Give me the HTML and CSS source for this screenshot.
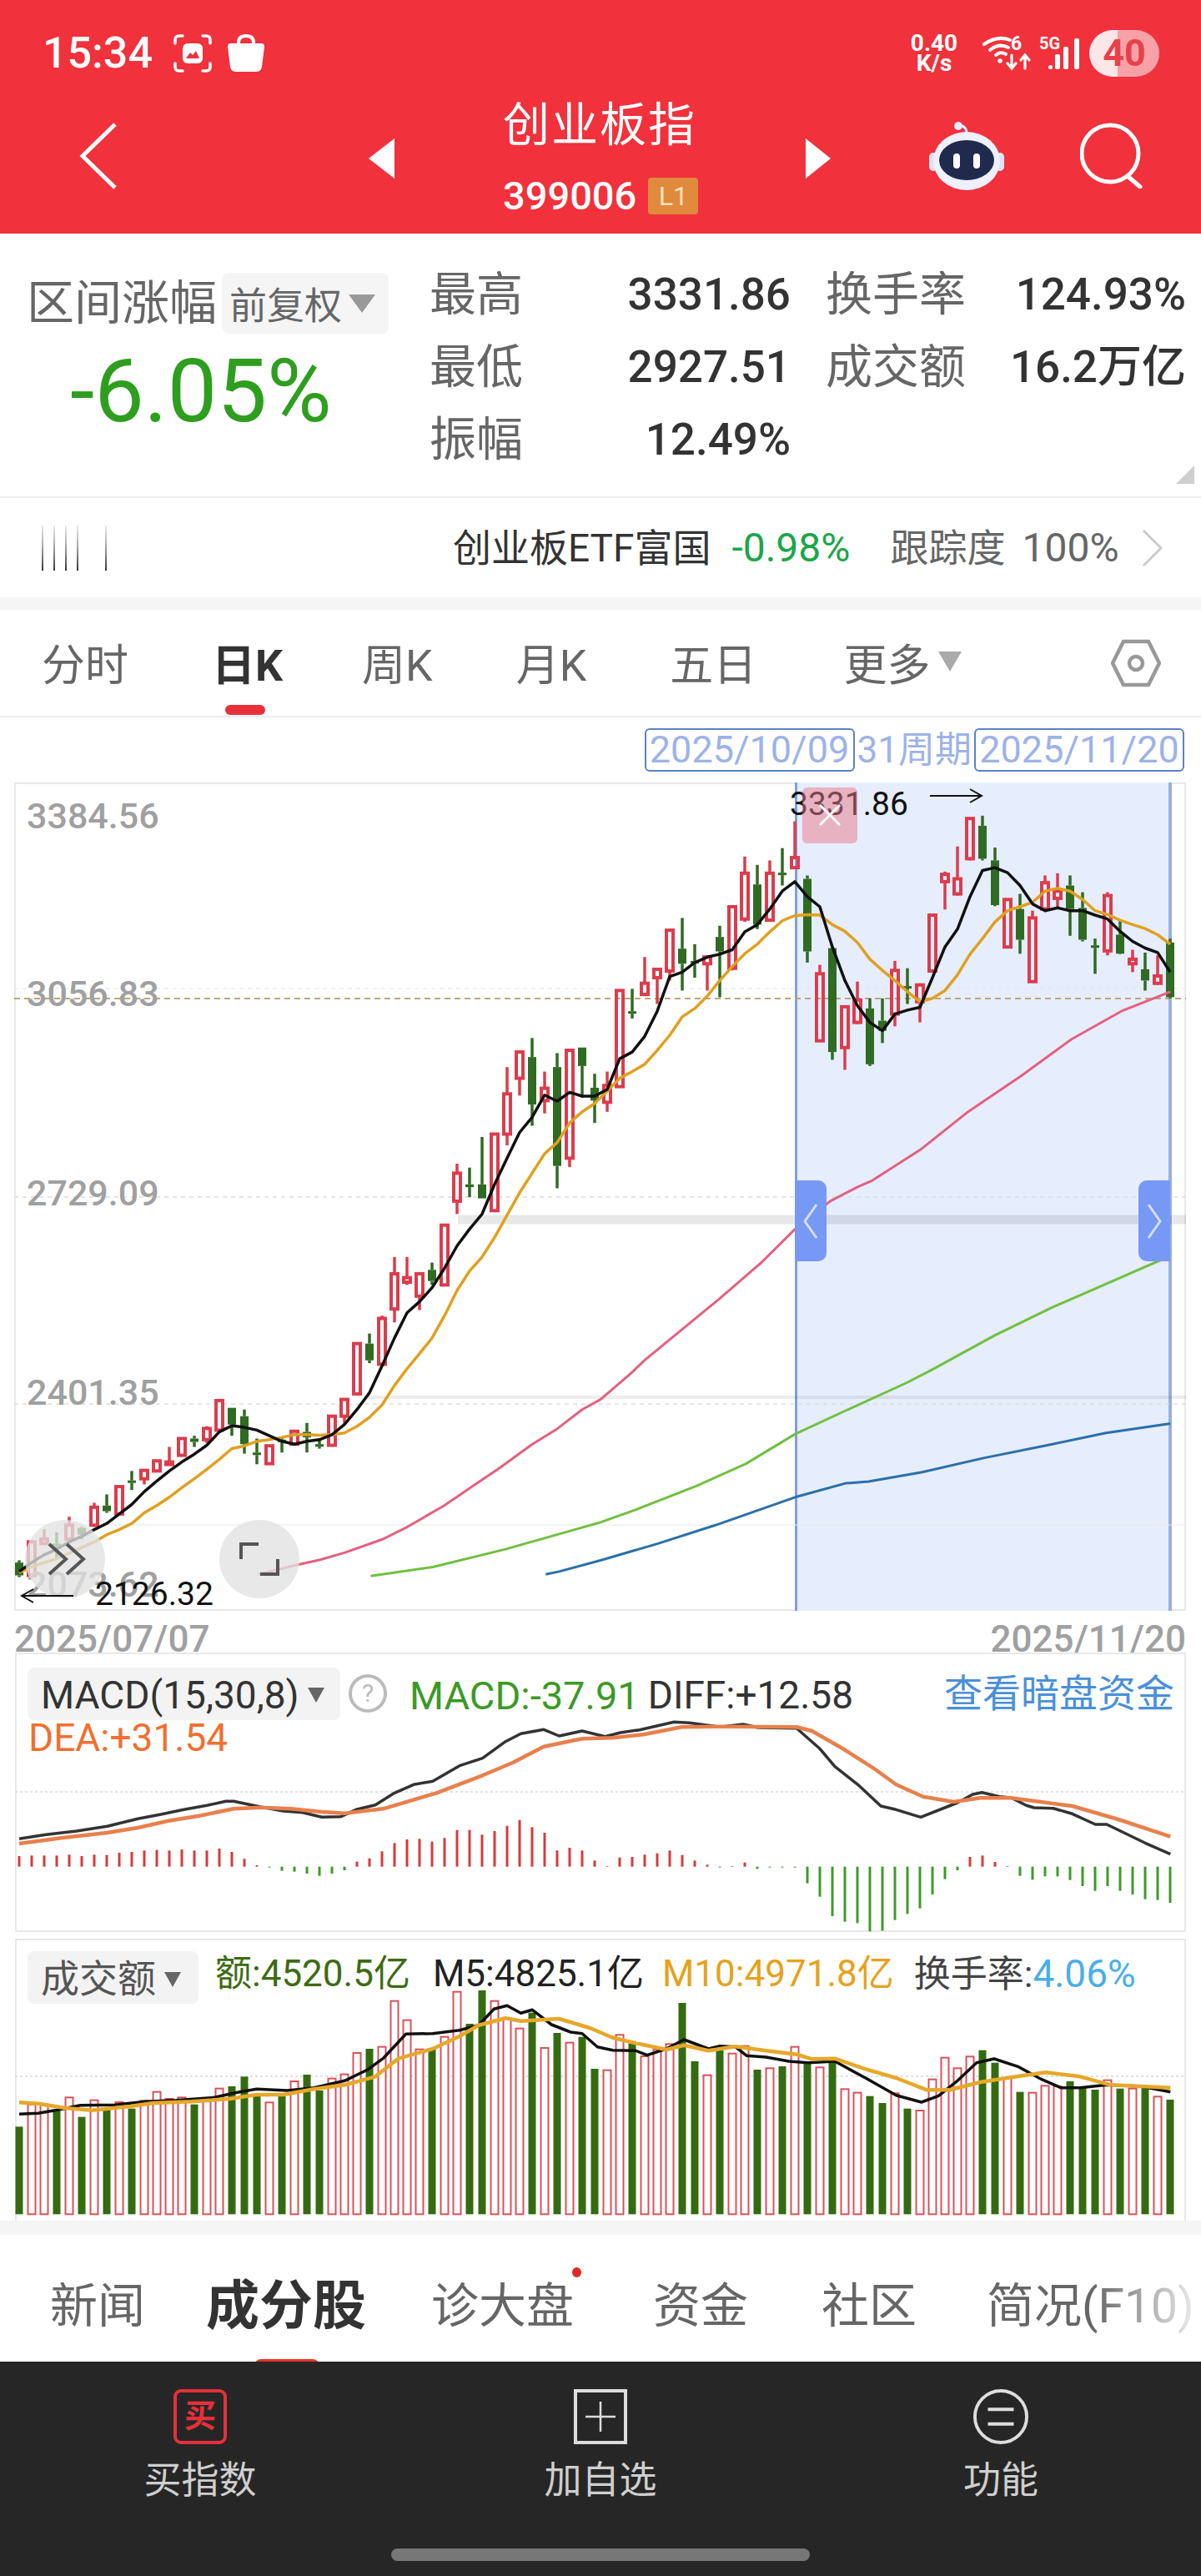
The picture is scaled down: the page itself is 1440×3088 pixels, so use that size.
FILE: index.html
```html
<!DOCTYPE html>
<html lang="zh-CN">
<head>
    <meta charset="UTF-8" />
    <meta name="viewport" content="width=device-width, initial-scale=1.0" />
    <title>创业板指</title>
    <link rel="stylesheet" href="styles.css">
</head>
<body>
    <header class="app-head">
        <div class="status-bar">
            <span class="clock">15:34</span>
            <svg class="shot-icon" viewBox="0 0 46 46" fill="none" stroke="#fff" stroke-width="3.5" stroke-linecap="round">
                <path d="M2 11V7q0-5 5-5h4M35 2h4q5 0 5 5v4M2 35v4q0 5 5 5h4M35 44h4q5 0 5-5v-4"/>
                <rect x="11" y="11" width="24" height="24" rx="6" fill="#fff" stroke="none"/>
                <path d="M15 29l5-7 3 3 4-5 4 9z" fill="#f1313b" stroke="none"/>
            </svg>
            <svg class="bag-icon" viewBox="0 0 44 46">
                <path d="M13 14V10q0-8 9-8t9 8v4" fill="none" stroke="#fff" stroke-width="4"/>
                <path d="M4 11h36q4 0 4 4l-3 24q-1 6-7 6H10q-6 0-7-6L0 15q0-4 4-4z" fill="#fff"/>
            </svg>
            <div class="status-right">
                <span class="net-speed">0.40<br>K/s</span>
                <div class="wifi">
                    <svg viewBox="0 0 58 46" fill="none" stroke="#fff" stroke-linecap="round">
                        <path d="M2 12Q18 1 33 7" stroke-width="4"/>
                        <path d="M9 19Q20 10 31 16" stroke-width="4"/>
                        <path d="M16 25q6-5 12-1" stroke-width="4"/>
                        <circle cx="21" cy="32" r="2.8" fill="#fff" stroke="none"/>
                        <path d="M35 25v16m-5-6l5 6 5-6M51 41V25m-5 6l5-6 5 6" stroke-width="3.2"/>
                    </svg>
                    <span class="wifi-num">6</span>
                </div>
                <div class="signal">
                    <svg viewBox="0 0 50 46">
                        <rect x="11" y="37" width="5" height="5" rx="2.5" fill="#fff"/>
                        <rect x="19" y="24" width="6" height="18" rx="2" fill="#fff"/>
                        <rect x="29" y="15" width="6" height="27" rx="2" fill="#fff"/>
                        <rect x="42" y="5" width="6" height="37" rx="2" fill="#fff"/>
                    </svg>
                    <span class="signal-txt">5G</span>
                </div>
                <span class="battery">40</span>
            </div>
        </div>
        <div class="nav-row">
            <svg class="back-icon" viewBox="0 0 46 80" fill="none" stroke="#fff" stroke-width="5">
                <path d="M43 2L4 40l39 38"/>
            </svg>
            <div class="tri-left"></div>
            <div class="nav-title">
                <div class="name">创业板指</div>
                <div class="code">399006<span class="level">L1</span></div>
            </div>
            <div class="tri-right"></div>
            <svg class="robot" viewBox="0 0 90 84">
                <path d="M45 14q0-7-8-9" fill="none" stroke="#e9ecfa" stroke-width="3"/>
                <circle cx="35" cy="6" r="5" fill="#e9ecfa"/>
                <rect x="0" y="38" width="10" height="22" rx="5" fill="#dfe2f5"/>
                <rect x="80" y="38" width="10" height="22" rx="5" fill="#dfe2f5"/>
                <ellipse cx="45" cy="48" rx="40" ry="35" fill="#eef0fb"/>
                <ellipse cx="45" cy="47" rx="33" ry="24" fill="#1f2a4d"/>
                <rect x="29" y="39" width="8" height="18" rx="4" fill="#fff"/>
                <rect x="53" y="39" width="8" height="18" rx="4" fill="#fff"/>
            </svg>
            <svg class="search-icon" viewBox="0 0 76 80" fill="none" stroke="#fff" stroke-width="5">
                <circle cx="36" cy="38" r="34"/>
                <path d="M58 66l14 12" stroke-linecap="round"/>
            </svg>
        </div>
    </header>

    <section class="stats">
        <div class="range">
            <div class="range-top">
                <span class="range-label">区间涨幅</span>
                <span class="adjust">前复权<i class="caret"></i></span>
            </div>
            <div class="range-value">-6.05%</div>
        </div>
        <div class="stat-grid">
            <span class="k">最高</span><span class="v">3331.86</span><span class="k">换手率</span><span class="v">124.93%</span>
            <span class="k">最低</span><span class="v">2927.51</span><span class="k">成交额</span><span class="v">16.2万亿</span>
            <span class="k">振幅</span><span class="v">12.49%</span>
        </div>
        <div class="corner"></div>
    </section>

    <section class="etf-row">
        <svg class="ghost-lines" viewBox="0 0 90 54">
            <defs>
                <linearGradient id="fade" x1="0" y1="0" x2="0" y2="1">
                    <stop offset="0" stop-color="#888" stop-opacity="0.2"/>
                    <stop offset="1" stop-color="#333"/>
                </linearGradient>
            </defs>
            <rect x="2" width="2" height="54" fill="url(#fade)"/>
            <rect x="16" width="2" height="54" fill="url(#fade)"/>
            <rect x="30" width="2" height="54" fill="url(#fade)"/>
            <rect x="44" width="2" height="54" fill="url(#fade)"/>
            <rect x="78" width="2" height="54" fill="url(#fade)"/>
        </svg>
        <span class="etf-name">创业板ETF富国</span>
        <span class="etf-pct">-0.98%</span>
        <span class="etf-track">跟踪度</span>
        <span class="etf-full">100%</span>
        <svg class="etf-arrow" viewBox="0 0 28 44" fill="none" stroke="#ccc" stroke-width="3"><path d="M3 1l21 21L3 43"/></svg>
    </section>

    <div class="band"></div>

    <nav class="period-tabs">
        <span>分时</span>
        <span class="on">日K</span>
        <span>周K</span>
        <span>月K</span>
        <span>五日</span>
        <span class="more">更多<i class="caret"></i></span>
        <svg class="hex" viewBox="0 0 60 58" fill="none" stroke="#999" stroke-width="4.5">
            <path d="M15 3h30l13 26-13 26H15L2 29z"/>
            <circle cx="30" cy="29" r="8"/>
        </svg>
    </nav>

    <div class="range-dates">
        <span class="date-box">2025/10/09</span>
        <span class="range-days">31周期</span>
        <span class="date-box">2025/11/20</span>
    </div>

    <section class="kline">
        <div class="selection"></div>
        <svg id="klineChart" class="chart-svg" viewBox="17 937 1405 993"></svg>
        <span class="axis a1">3384.56</span>
        <span class="axis a2">3056.83</span>
        <span class="axis a3">2729.09</span>
        <span class="axis a4">2401.35</span>
        <span class="axis a5">2073.62</span>
        <div class="round-btn btn-skip">
            <svg viewBox="0 0 50 40" fill="none" stroke="#555" stroke-width="4"><path d="M3 2l20 18L3 38M24 2l20 18-20 18"/></svg>
        </div>
        <div class="round-btn btn-full">
            <svg viewBox="0 0 50 40" fill="none" stroke="#555" stroke-width="4"><path d="M24 2H3v18M26 38h21V20"/></svg>
        </div>
        <span class="peak-label low">2126.32</span>
        <span class="peak-label high">3331.86</span>
        <svg class="mark-arrow arrow-low" viewBox="0 0 64 20" fill="none" stroke="#111" stroke-width="2"><path d="M64 10H2m14-8L2 10l14 8"/></svg>
        <svg class="mark-arrow arrow-high" viewBox="0 0 64 20" fill="none" stroke="#111" stroke-width="2"><path d="M0 10h62m-14-8l14 8-14 8"/></svg>
        <div class="close-tag">
            <svg viewBox="0 0 30 30" fill="none" stroke="#fff" stroke-width="3"><path d="M3 3l24 24M27 3L3 27"/></svg>
        </div>
        <div class="handle handle-l">
            <svg viewBox="0 0 20 44" fill="none" stroke="#d5defb" stroke-width="3"><path d="M17 2L3 22l14 20"/></svg>
        </div>
        <div class="handle handle-r">
            <svg viewBox="0 0 20 44" fill="none" stroke="#d5defb" stroke-width="3"><path d="M3 2l14 20L3 42"/></svg>
        </div>
    </section>

    <div class="axis-dates">
        <span>2025/07/07</span>
        <span>2025/11/20</span>
    </div>

    <section class="panel macd">
        <svg id="macdChart" class="panel-svg" viewBox="18 1980 1404 335"></svg>
        <div class="panel-head">
            <span class="picker picker-macd">MACD(15,30,8)<i class="caret"></i></span>
            <span class="help">?</span>
            <span class="c-green">MACD:-37.91</span>
            <span class="c-dark">DIFF:+12.58</span>
            <a class="dark-pool">查看暗盘资金</a>
        </div>
        <div class="dea">DEA:+31.54</div>
    </section>

    <section class="panel volume">
        <svg id="volChart" class="panel-svg" viewBox="18 2323 1404 338"></svg>
        <div class="panel-head">
            <span class="picker picker-vol">成交额<i class="caret"></i></span>
            <span class="c-olive">额:4520.5亿</span>
            <span class="c-black">M5:4825.1亿</span>
            <span class="c-gold">M10:4971.8亿</span>
            <span class="c-dark">换手率:<b class="c-sky">4.06%</b></span>
        </div>
    </section>

    <div class="band band-low"></div>

    <nav class="info-tabs">
        <span class="t1">新闻</span>
        <span class="t2 on">成分股</span>
        <span class="t3">诊大盘<i class="dot"></i></span>
        <span class="t4">资金</span>
        <span class="t5">社区</span>
        <span class="t6">简况(F10)</span>
    </nav>

    <footer class="action-bar">
        <div class="actions">
            <div class="action">
                <span class="buy-icon">买</span>
                <span class="action-label">买指数</span>
            </div>
            <div class="action">
                <svg class="action-icon" viewBox="0 0 64 66" fill="none" stroke="#ddd" stroke-width="4">
                    <rect x="2" y="2" width="60" height="62"/>
                    <path d="M14 33h36M32 15v36" stroke-width="2.5"/>
                </svg>
                <span class="action-label">加自选</span>
            </div>
            <div class="action">
                <svg class="action-icon" viewBox="0 0 68 68" fill="none" stroke="#ddd" stroke-width="4">
                    <circle cx="34" cy="34" r="32"/>
                    <path d="M18 25h32M18 43h32"/>
                </svg>
                <span class="action-label">功能</span>
            </div>
        </div>
        <div class="home-bar"></div>
    </footer>

    <script src="chart.js"></script>
</body>
</html>
```

FILE: styles.css
```css
* {
    box-sizing: border-box;
}
body {
    margin: 0;
    width: 1440px;
    background: #fff;
    font-family: Roboto, "Noto Sans CJK SC", sans-serif;
    color: #333;
    overflow-x: hidden;
}
svg {
    display: block;
    flex: none;
}

/* red header */
.app-head {
    height: 280px;
    background: #f1313b;
    color: #fff;
}
.status-bar {
    display: flex;
    align-items: center;
    height: 128px;
    padding: 0 50px 0 51px;
}
.clock {
    width: 133px;
    font-size: 52px;
    font-weight: 500;
    line-height: 60px;
}
.shot-icon {
    width: 46px;
    height: 46px;
    margin-left: 24px;
}
.bag-icon {
    width: 44px;
    height: 46px;
    margin-left: 19px;
}
.status-right {
    display: flex;
    align-items: center;
    margin-left: auto;
}
.net-speed {
    width: 60px;
    font-size: 28px;
    font-weight: 700;
    line-height: 24px;
    text-align: center;
}
.wifi, .signal {
    position: relative;
    height: 46px;
}
.wifi svg, .signal svg {
    width: 100%;
    height: 46px;
}
.wifi {
    width: 58px;
    margin-left: 28px;
}
.wifi-num {
    position: absolute;
    left: 34px;
    top: 2px;
    font-size: 23px;
    font-weight: 700;
    line-height: 20px;
}
.signal {
    width: 50px;
    margin-left: 10px;
}
.signal-txt {
    position: absolute;
    left: 0;
    top: 2px;
    font-size: 20px;
    font-weight: 700;
    line-height: 18px;
}
.battery {
    width: 84px;
    height: 56px;
    margin-left: 10px;
    border-radius: 28px;
    background: linear-gradient(90deg, #fbe6e8 40%, #f8a2a7 40%);
    color: #e8404a;
    font-size: 45px;
    font-weight: 700;
    line-height: 56px;
    text-align: center;
}
.nav-row {
    display: flex;
    align-items: flex-start;
    height: 152px;
    padding-left: 95px;
}
.back-icon {
    width: 46px;
    height: 80px;
    margin-top: 19px;
}
.tri-left, .tri-right {
    width: 0;
    height: 0;
    margin-top: 38px;
    border-top: 24px solid transparent;
    border-bottom: 24px solid transparent;
}
.tri-left {
    border-right: 31px solid #fff;
    margin-left: 301px;
}
.tri-right {
    border-left: 30px solid #fff;
}
.nav-title {
    width: 493px;
    margin-top: -15px;
    padding-left: 130px;
}
.name {
    font-size: 56px;
    line-height: 74px;
    letter-spacing: 2px;
}
.code {
    display: flex;
    align-items: center;
    margin-top: 23px;
    font-size: 47px;
    font-weight: 500;
    line-height: 50px;
}
.level {
    width: 60px;
    height: 44px;
    margin-left: 14px;
    border-radius: 4px;
    background: #e08a3c;
    color: #fbe3b8;
    font-size: 32px;
    font-weight: 400;
    line-height: 44px;
    text-align: center;
}
.robot {
    width: 90px;
    height: 84px;
    margin-left: 118px;
    margin-top: 17px;
}
.search-icon {
    width: 76px;
    height: 80px;
    margin-left: 91px;
    margin-top: 18px;
}

/* stats */
.stats {
    position: relative;
    display: flex;
    height: 317px;
    border-bottom: 2px solid #eeeeee;
}
.range {
    width: 515px;
    padding: 47px 0 0 32px;
}
.range-top {
    display: flex;
    align-items: center;
}
.range-label {
    color: #666;
    font-size: 57px;
    line-height: 72px;
    white-space: nowrap;
}
.adjust {
    display: flex;
    align-items: center;
    width: 200px;
    height: 73px;
    margin-left: 6px;
    padding-left: 9px;
    border-radius: 8px;
    background: #f5f5f5;
    color: #666;
    font-size: 45px;
    white-space: nowrap;
}
.caret {
    display: inline-block;
    border-left: 16px solid transparent;
    border-right: 16px solid transparent;
    border-top: 22px solid #999;
}
.adjust .caret {
    margin-left: 8px;
}
.range-value {
    margin: 14px 0 0 52px;
    color: #2e9e1f;
    font-size: 106px;
    line-height: 110px;
}
.stat-grid {
    display: grid;
    grid-template-columns: 153px 280px 212px 262px;
    grid-auto-rows: 87px;
    align-items: center;
    width: 907px;
    padding-top: 30px;
}
.stat-grid .k {
    color: #666;
    font-size: 56px;
    line-height: 87px;
    white-space: nowrap;
}
.stat-grid .k:nth-child(3), .stat-grid .k:nth-child(7) {
    padding-left: 42px;
}
.stat-grid .v {
    color: #333;
    font-size: 53px;
    font-weight: 500;
    line-height: 87px;
    text-align: right;
    white-space: nowrap;
}
.corner {
    position: absolute;
    right: 8px;
    top: 278px;
    border-left: 22px solid transparent;
    border-bottom: 22px solid #cfcfcf;
}

/* etf row */
.etf-row {
    display: flex;
    align-items: center;
    height: 119px;
    padding-left: 48px;
    font-size: 46px;
    line-height: 60px;
    white-space: nowrap;
}
.ghost-lines {
    width: 90px;
    height: 54px;
}
.etf-name {
    margin-left: 405px;
    color: #333;
}
.etf-pct {
    margin-left: 25px;
    color: #1aa64a;
    font-size: 48px;
}
.etf-track {
    margin-left: 48px;
    color: #666;
}
.etf-full {
    margin-left: 20px;
    color: #666;
    font-size: 48px;
}
.etf-arrow {
    width: 28px;
    height: 44px;
    margin-left: 26px;
}
.band {
    height: 15px;
    background: #f5f5f5;
}

/* period tabs */
.period-tabs {
    display: flex;
    align-items: center;
    height: 129px;
    padding: 8px 48px 0 50px;
    border-bottom: 2px solid #eeeeee;
    color: #666;
    font-size: 52px;
    line-height: 60px;
    white-space: nowrap;
}
.period-tabs span {
    margin-right: 100px;
}
.period-tabs .on {
    position: relative;
    margin-left: 0;
    margin-right: 95px;
    color: #333;
    font-weight: 700;
}
.period-tabs .on::after {
    content: "";
    position: absolute;
    left: 16px;
    top: 76px;
    width: 48px;
    height: 12px;
    border-radius: 6px;
    background: #e8303a;
}
.period-tabs .more {
    display: flex;
    align-items: center;
    margin-left: 4px;
    margin-right: 0;
}
.more .caret {
    margin: -12px 0 0 10px;
    border-left-width: 14px;
    border-right-width: 14px;
    border-top-width: 24px;
    border-top-color: #aaa;
}
.hex {
    width: 60px;
    height: 58px;
    margin-left: auto;
    margin-top: -8px;
}

/* selected date range */
.range-dates {
    display: flex;
    justify-content: flex-end;
    align-items: center;
    height: 78px;
    padding-right: 20px;
    color: #9db3e8;
    font-size: 44px;
    white-space: nowrap;
}
.date-box {
    width: 252px;
    height: 52px;
    border: 2px solid #5b82c8;
    border-radius: 6px;
    font-size: 45px;
    line-height: 48px;
    text-align: center;
}
.range-days {
    margin: 0 3px;
    line-height: 52px;
}

/* k-line area */
.kline {
    position: relative;
    width: 1405px;
    height: 993px;
    margin-left: 17px;
    border: 2px solid #e8e8e8;
}
.selection {
    position: absolute;
    left: 934px;
    top: -2px;
    width: 452px;
    height: 993px;
    background: #e6edfd;
    border-left: 3px solid #7f9fe0;
    border-right: 4px solid #9ab0dc;
}
.chart-svg {
    position: absolute;
    left: -2px;
    top: -2px;
    width: 1405px;
    height: 993px;
}
.axis {
    position: absolute;
    left: 13px;
    color: #a0a0a0;
    font-size: 43px;
    font-weight: 500;
    line-height: 50px;
}
.a1 { top: 13px; }
.a2 { top: 226px; }
.a3 { top: 465px; }
.a4 { top: 704px; }
.a5 { top: 934px; }
.round-btn {
    position: absolute;
    top: 882px;
    width: 96px;
    height: 94px;
    border-radius: 50%;
    background: rgba(226, 226, 226, 0.78);
}
.btn-skip {
    left: 11px;
}
.btn-full {
    left: 244px;
}
.btn-skip svg {
    width: 50px;
    height: 40px;
    margin: 27px 0 0 26px;
}
.btn-full svg {
    width: 50px;
    height: 40px;
    margin: 27px 0 0 23px;
}
.peak-label {
    position: absolute;
    color: #111;
    font-size: 39px;
    line-height: 44px;
}
.low {
    left: 95px;
    top: 949px;
}
.high {
    left: 928px;
    top: 2px;
}
.mark-arrow {
    position: absolute;
    width: 64px;
    height: 20px;
}
.arrow-low {
    left: 5px;
    top: 963px;
}
.arrow-high {
    left: 1096px;
    top: 4px;
}
.close-tag {
    position: absolute;
    left: 943px;
    top: 4px;
    width: 66px;
    height: 67px;
    border-radius: 6px;
    background: rgba(232, 120, 135, 0.5);
}
.close-tag svg {
    width: 30px;
    height: 30px;
    margin: 18px 0 0 18px;
}
.handle {
    position: absolute;
    top: 475px;
    width: 38px;
    height: 97px;
    background: #7898f5;
}
.handle svg {
    width: 20px;
    height: 44px;
    margin: 27px 0 0 9px;
}
.handle-l {
    left: 934px;
    border-radius: 0 10px 10px 0;
}
.handle-r {
    left: 1346px;
    border-radius: 10px 0 0 10px;
}
.axis-dates {
    display: flex;
    justify-content: space-between;
    height: 50px;
    padding: 0 18px 0 17px;
    color: #a0a0a0;
    font-size: 44px;
    font-weight: 500;
    line-height: 68px;
}

/* macd and volume panels */
.panel {
    position: relative;
    width: 1404px;
    margin-left: 18px;
    border: 2px solid #e8e8e8;
}
.macd {
    height: 335px;
}
.volume {
    height: 338px;
    margin-top: 8px;
    border-bottom: 0;
}
.panel-svg {
    position: absolute;
    left: -2px;
    top: -2px;
    width: 1404px;
}
.macd .panel-svg {
    height: 335px;
}
.volume .panel-svg {
    height: 338px;
}
.panel-head {
    position: relative;
    display: flex;
    align-items: center;
    padding: 13px 0 0 13px;
    font-size: 46px;
    line-height: 63px;
    white-space: nowrap;
}
.picker {
    display: flex;
    align-items: center;
    height: 63px;
    padding: 4px 0 0 16px;
    border-radius: 8px;
    background: #f3f3f3;
    color: #333;
}
.picker .caret {
    margin-left: 10px;
    border-left-width: 10px;
    border-right-width: 10px;
    border-top-width: 18px;
    border-top-color: #666;
}
.picker-macd {
    width: 375px;
    flex: none;
}
.picker-vol {
    width: 205px;
    flex: none;
    color: #555;
}
.help {
    width: 46px;
    height: 46px;
    margin-left: 10px;
    border: 4px solid #bbb;
    border-radius: 50%;
    color: #bbb;
    font-size: 30px;
    line-height: 38px;
    text-align: center;
}
.macd .c-green, .macd .c-dark {
    margin-top: 5px;
}
.c-green {
    margin-left: 27px;
    color: #3b9a26;
    font-size: 47px;
}
.c-dark {
    margin-left: 10px;
    color: #333;
}
.dark-pool {
    margin-left: auto;
    margin-right: 12px;
    color: #4a90d9;
    font-size: 46px;
}
.dea {
    position: relative;
    margin-top: -6px;
    padding-left: 14px;
    color: #f07030;
    font-size: 46px;
    line-height: 50px;
}
.volume .panel-head span:not(.picker) {
    margin-top: -8px;
    font-size: 44px;
}
.c-olive {
    margin-left: 20px;
    color: #3e6b12;
}
.c-black {
    margin-left: 27px;
    color: #222;
}
.c-gold {
    margin-left: 22px;
    color: #e6a21b;
}
.volume .c-dark {
    margin-left: 24px;
    color: #444;
}
.c-sky {
    color: #4aaee8;
    font-size: 46px;
    font-weight: 400;
}

/* lower tabs */
.band-low {
    height: 17px;
}
.info-tabs {
    position: relative;
    display: flex;
    align-items: center;
    height: 152px;
    padding-top: 20px;
    overflow: hidden;
    color: #666;
    font-size: 57px;
    line-height: 70px;
    white-space: nowrap;
}
.info-tabs::after {
    content: "";
    position: absolute;
    right: 0;
    top: 0;
    width: 130px;
    height: 100%;
    background: linear-gradient(90deg, rgba(255, 255, 255, 0), rgba(255, 255, 255, 0.92));
}
.info-tabs span {
    position: relative;
    flex: none;
}
.info-tabs .t1 { margin-left: 60px; }
.info-tabs .t2 {
    margin-left: 73px;
    color: #333;
    font-size: 64px;
    font-weight: 700;
}
.info-tabs .t2::after {
    content: "";
    position: absolute;
    left: 58px;
    top: 98px;
    width: 78px;
    height: 18px;
    border-radius: 8px 8px 0 0;
    background: #e8352e;
}
.info-tabs .t3 { margin-left: 78px; }
.info-tabs .t4 { margin-left: 95px; }
.info-tabs .t5 { margin-left: 88px; }
.info-tabs .t6 { margin-left: 84px; }
.dot {
    position: absolute;
    right: -9px;
    top: -12px;
    width: 11px;
    height: 12px;
    border-radius: 50%;
    background: #e02a2a;
}

/* bottom bar */
.action-bar {
    height: 259px;
    background: #262626;
}
.actions {
    display: grid;
    grid-template-columns: repeat(3, 480px);
    padding-top: 33px;
}
.action {
    display: flex;
    flex-direction: column;
    align-items: center;
}
.action-icon {
    width: 66px;
    height: 66px;
}
.buy-icon {
    width: 64px;
    height: 66px;
    border: 4px solid #e5303a;
    border-radius: 9px;
    color: #e5303a;
    font-size: 38px;
    font-weight: 700;
    line-height: 56px;
    text-align: center;
}
.action-label {
    margin-top: 14px;
    color: #cfcfcf;
    font-size: 45px;
    line-height: 60px;
}
.home-bar {
    width: 502px;
    height: 15px;
    margin: 51px auto 0;
    border-radius: 8px;
    background: #777;
}
```

FILE: chart.js
```js
const SVG_NS = 'http://www.w3.org/2000/svg';

// x of the nth trading day, shared by all three charts
const dayX = i => 23 + 15 * i;

// [wick top, body top, body bottom, wick bottom, up?] read off the reference
const candles = [
    [1388,1392,1415,1418,0],[1355,1355,1415,1415,1],[1332,1350,1358,1360,1],[1338,1358,1361,1385,0],
    [1310,1325,1350,1355,1],[1328,1330,1342,1350,0],[1285,1293,1325,1328,1],[1270,1290,1300,1303,0],
    [1255,1256,1305,1305,1],[1228,1245,1247,1262,0],[1225,1227,1242,1252,1],[1208,1210,1228,1230,1],
    [1185,1212,1215,1216,1],[1170,1170,1200,1202,1],[1165,1170,1176,1185,0],[1148,1152,1172,1178,1],
    [1102,1102,1155,1160,1],[1115,1115,1145,1165,0],[1118,1130,1180,1197,0],[1170,1195,1198,1216,0],
    [1183,1183,1215,1215,1],[1168,1172,1175,1195,0],[1155,1157,1180,1180,1],[1142,1158,1168,1195,0],
    [1170,1180,1182,1188,0],[1128,1130,1182,1182,1],[1098,1100,1130,1145,1],[1000,1000,1090,1090,1],
    [982,1000,1030,1035,0],[950,955,1037,1037,1],[845,875,938,962,1],[845,882,890,895,1],
    [872,875,915,940,1],[855,868,888,895,0],[788,788,895,895,1],[678,695,745,768,1],
    [685,715,720,738,0],[630,715,740,740,0],[625,625,762,762,1],[505,553,625,645,1],
    [478,478,525,556,1],[453,487,572,610,0],[513,543,565,588,1],[480,505,682,722,0],
    [473,475,668,684,1],[470,470,503,560,0],[517,542,565,605,0],[513,538,568,585,1],
    [368,368,540,540,1],[365,405,408,418,0],[308,355,375,378,1],[328,330,345,392,1],
    [260,260,333,350,1],[238,293,320,368,0],[285,315,318,345,0],[305,308,320,368,1],
    [252,272,298,380,0],[218,218,328,332,1],[128,158,240,245,1],[143,178,250,258,0],
    [135,158,242,243,1],[113,157,160,180,0],[65,130,148,150,1],[162,168,298,318,0],
    [322,338,458,458,1],[292,292,478,492,0],[395,397,470,510,1],[352,385,425,428,1],
    [382,400,500,503,0],[382,422,440,462,0],[315,332,410,432,1],[328,360,362,392,0],
    [355,358,388,425,1],[233,233,333,335,1],[155,160,173,223,1],[110,168,195,198,1],
    [60,60,132,135,1],[55,73,132,135,0],[112,135,215,217,0],[205,205,290,292,1],
    [195,222,277,302,0],[225,238,352,352,1],[162,175,222,225,1],[158,190,203,222,1],
    [162,180,222,270,0],[192,220,277,280,0],[275,287,290,338,0],[192,198,297,305,1],
    [242,268,302,303,0],[295,312,320,335,1],[300,330,350,368,0],[305,342,355,358,1],
    [275,282,380,382,0]
];

const ma5 = [1408,1392,1378,1368,1355,1345,1333,1322,1305,1288,1265,1246,1228,1212,1198,1182,1158,1147,1150,1155,1165,1175,1180,1175,1172,1163,1145,1118,1088,1040,990,945,925,900,865,825,795,768,715,668,622,595,555,566,550,557,557,
    545,490,478,450,405,343,335,318,308,303,295,263,250,222,190,173,200,218,290,350,395,425,440,410,403,398,345,290,258,200,153,148,157,180,213,225,220,225,225,233,240,262,280,292,300,335];
const ma10 = [1410,1400,1392,1385,1375,1365,1355,1342,1333,1322,1303,1290,1275,1258,1242,1225,1207,1188,1183,1175,1172,1168,1163,1163,1164,1163,1160,1148,1132,1110,1075,1045,1018,990,950,905,870,845,810,770,730,695,660,640,605,585,570,
    548,525,513,500,475,448,415,400,378,350,325,302,285,263,243,234,232,233,250,262,282,312,332,350,370,388,382,368,340,303,275,245,225,218,210,190,185,190,205,225,232,242,250,257,268,285];

// long averages as [x, y] in page pixels
const fromLeft = pts => pts.map(p => [p[0] * 720 / 1568, 940 + p[1] * 1050 / 1568]);
const fromRight = pts => pts.map(p => [720 + p[0] * 720 / 1568, 940 + p[1] * 1050 / 1568]);

const ma60 = fromLeft([[675,1413],[770,1397],[836,1387],[901,1374],[1000,1350],[1064,1328],[1160,1290],[1260,1243],[1300,1225],[1390,1180],[1456,1152],[1520,1118]])
    .concat(fromRight([[0,1100],[80,1053],[115,1030],[310,920],[420,855],[508,795],[600,745],[670,720],[710,708],[835,653],[960,585],[1100,520],[1230,455],[1360,405],[1488,370]]));
const ma120 = fromLeft([[968,1416],[1130,1400],[1320,1368]])
    .concat(fromRight([[0,1320],[90,1298],[250,1255],[380,1215],[508,1162],[640,1120],[800,1070],[870,1045],[1030,985],[1180,935],[1488,843]]));
const ma250 = fromLeft([[1425,1413],[1460,1408]])
    .concat(fromRight([[0,1388],[80,1372],[150,1358],[300,1325],[508,1275],[640,1250],[700,1247],[840,1230],[1000,1205],[1180,1180],[1320,1160],[1488,1143]]));

const diffLine = [[25,700],[60,685],[100,672],[140,655],[180,628],[210,612],[240,595],[270,580],[295,565],[305,565],[340,585],[370,600],[395,605],[420,622],[445,620],[465,595],[490,578],[515,535],[540,505],[565,493],[600,437],[630,410],[660,350],[680,322],[710,307],[730,330],[760,312],[790,332],[810,318],[835,308],[880,280],[900,283],[940,298],[970,288],[990,300],[1040,302],[1070,375],[1090,440],[1120,505],[1150,582],[1170,595],[1202,622],[1250,570],[1270,540],[1282,533],[1305,548],[1320,552],[1340,580],[1350,588],[1375,590],[1400,610],[1430,648],[1445,648],[1495,715],[1528,755]];
const deaLine = [[25,717],[80,697],[140,678],[180,660],[220,635],[260,617],[305,592],[340,587],[380,592],[420,603],[450,608],[500,592],[570,535],[630,472],[670,425],[710,368],[760,340],[800,337],[840,325],[890,298],[940,296],[1040,298],[1060,312],[1100,375],[1140,445],[1170,505],[1205,548],[1245,567],[1280,553],[1320,553],[1400,582],[1460,630],[1528,692]];
const macdBars = [762,760,760,760,757,762,757,758,750,747,742,740,742,738,742,742,735,747,772,795,803,815,818,825,833,825,813,782,770,745,715,702,700,710,697,668,668,685,672,653,632,658,678,742,732,742,778,798,767,765,757,752,742,758,778,793,803,798,785,808,803,803,803,860,908,978,998,1003,1033,1030,992,970,950,900,845,813,765,760,783,798,833,847,835,835,848,870,887,870,887,900,917,920,930];

const volBars = [685,605,605,625,580,650,590,625,597,620,592,560,585,580,605,585,548,540,505,575,598,575,522,498,555,512,497,420,405,398,233,302,407,403,362,200,315,195,233,295,332,275,402,348,383,362,477,482,355,385,432,408,388,240,450,500,410,422,395,480,475,468,398,455,472,450,550,563,575,600,565,620,627,515,437,475,433,410,455,510,560,563,538,540,522,540,552,518,548,548,545,577,588];
const volM5 = [[25,640],[50,637],[75,625],[105,608],[150,607],[190,595],[230,590],[280,580],[310,562],[335,550],[375,555],[410,545],[450,520],[480,480],[500,440],[530,352],[565,350],[600,338],[625,320],[645,262],[662,250],[680,277],[695,265],[720,318],[745,345],[760,350],[780,398],[800,410],[830,412],[845,428],[870,405],[893,372],[925,405],[940,395],[960,398],[975,430],[1000,435],[1030,450],[1055,455],[1090,450],[1130,510],[1170,572],[1203,597],[1225,575],[1250,520],[1275,455],[1298,441],[1330,470],[1360,515],[1385,545],[1410,545],[1445,535],[1490,540],[1528,560]];
const volM10 = [[25,598],[50,602],[85,618],[120,626],[170,612],[200,600],[250,595],[300,585],[335,570],[370,570],[410,550],[450,535],[490,505],[520,440],[565,405],[600,360],[625,320],[660,295],[680,305],[730,297],[770,330],[800,365],[830,385],[870,408],[893,392],[925,412],[960,397],[1000,412],[1040,425],[1060,442],[1090,440],[1130,478],[1170,510],[1210,553],[1240,553],[1280,525],[1320,508],[1365,490],[1410,505],[1450,535],[1490,540],[1528,545]];

function add(svg, name, attrs) {
    const el = document.createElementNS(SVG_NS, name);
    for (const key in attrs) el.setAttribute(key, attrs[key]);
    svg.appendChild(el);
    return el;
}

function polyline(svg, pts, color, width) {
    add(svg, 'polyline', {
        points: pts.map(p => p[0].toFixed(1) + ',' + p[1].toFixed(1)).join(' '),
        fill: 'none', stroke: color, 'stroke-width': width, 'stroke-linejoin': 'round'
    });
}

function hline(svg, y, x1, x2, color, width, dash) {
    const attrs = { x1, x2, y1: y, y2: y, stroke: color, 'stroke-width': width };
    if (dash) attrs['stroke-dasharray'] = dash;
    add(svg, 'line', attrs);
}

function drawKline() {
    const svg = document.getElementById('klineChart');
    const y = z => 940 + z * 1050 / 1568;

    hline(svg, 1184, 17, 1422, '#e4e4e4', 1, '5 5');
    hline(svg, 1196, 17, 1422, '#b9a878', 2, '7 5');
    hline(svg, 1434, 17, 1422, '#dddddd', 1.5, '5 5');
    hline(svg, 1682, 17, 1422, '#dddddd', 1.5, '5 5');
    hline(svg, 1827, 17, 1422, '#e8e8e8', 1);
    hline(svg, 1461, 549, 1422, 'rgba(0,0,0,0.09)', 11);
    hline(svg, 1674, 441, 1422, 'rgba(0,0,0,0.07)', 4);

    candles.forEach((c, i) => {
        const x = dayX(i);
        const color = c[4] ? '#dc3c4c' : '#2f6b22';
        const top = y(c[1]);
        const h = Math.max(y(c[2]) - top, 3);
        add(svg, 'line', { x1: x, x2: x, y1: y(c[0]), y2: top, stroke: color, 'stroke-width': 3.5 });
        add(svg, 'line', { x1: x, x2: x, y1: top + h, y2: y(c[3]), stroke: color, 'stroke-width': 3.5 });
        if (c[4]) {
            add(svg, 'rect', { x: x - 4, y: top, width: 8, height: h, fill: 'none', stroke: color, 'stroke-width': 4 });
        } else {
            add(svg, 'rect', { x: x - 5, y: top, width: 10, height: h, fill: color });
        }
    });

    polyline(svg, ma60, '#e4607e', 3);
    polyline(svg, ma120, '#70c040', 3);
    polyline(svg, ma250, '#2a70a8', 3);
    polyline(svg, ma10.map((v, i) => [dayX(i), y(v)]), '#e0a020', 3.5);
    polyline(svg, ma5.map((v, i) => [dayX(i), y(v)]), '#111', 3.5);
}

function drawMacd() {
    const svg = document.getElementById('macdChart');
    const y = z => 1970 + z / 3;
    const toPage = p => [p[0] * 1440 / 1568, y(p[1])];

    hline(svg, 2147, 18, 1422, '#d8d8d8', 1.5, '3 3');
    macdBars.forEach((top, i) => {
        const color = top < 800 ? '#d83a3a' : '#3e9a2a';
        add(svg, 'line', { x1: dayX(i), x2: dayX(i), y1: y(top), y2: y(800), stroke: color, 'stroke-width': 3 });
    });
    polyline(svg, diffLine.map(toPage), '#333', 3.5);
    polyline(svg, deaLine.map(toPage), '#e8804c', 4.5);
}

function drawVolume() {
    const svg = document.getElementById('volChart');
    const y = z => 2320 + z / 3;
    const toPage = p => [p[0] * 1440 / 1568, y(p[1])];
    const base = y(1000);

    hline(svg, 2488, 18, 1422, '#d8d8d8', 1.5, '3 3');
    volBars.forEach((top, i) => {
        const x = dayX(i);
        if (candles[i][4]) {
            add(svg, 'rect', { x: x - 4.5, y: y(top), width: 9, height: base - y(top), fill: '#fff', stroke: '#d9525a', 'stroke-width': 2 });
        } else {
            add(svg, 'rect', { x: x - 4.5, y: y(top), width: 9, height: base - y(top), fill: '#356b10' });
        }
    });
    polyline(svg, volM5.map(toPage), '#111', 3.5);
    polyline(svg, volM10.map(toPage), '#e6a82a', 4.5);
}

drawKline();
drawMacd();
drawVolume();
```
